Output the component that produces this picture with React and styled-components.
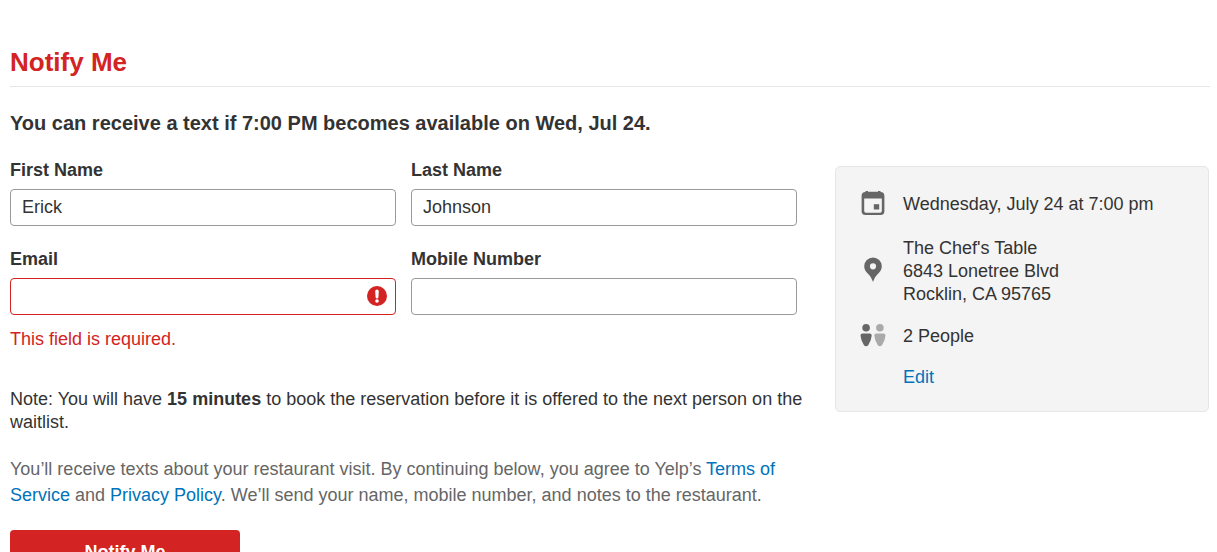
import React from 'react';
import styled, {createGlobalStyle, css} from 'styled-components';

const red = '#d32323';
const grey = '#666';

const GlobalStyle = createGlobalStyle`
* {
box-sizing: border-box;
}
body {
margin: 0;
background: #fff;
color: #333;
font-family: "Liberation Sans", Arial, sans-serif;
font-size: 18px;
line-height: 23px;
}
`;

const Page = styled.main`
padding: 44px 7px 24px 10px;
`;

const Title = styled.h1`
margin: 0 0 22px;
padding-bottom: 6px;
border-bottom: 1px solid #e6e6e6;
color: ${red};
font-size: 26px;
line-height: 36px;
`;

const Subtitle = styled.h2`
margin: 0 0 22px;
font-size: 20px;
line-height: 28px;
`;

const Columns = styled.div`
display: grid;
grid-template-columns: minmax(0, 1fr) 374px;
column-gap: 16px;
align-items: start;
padding-right: 1px;
`;

const Fields = styled.div`
display: grid;
grid-template-columns: 1fr 1fr;
gap: 22px 15px;
align-items: start;
margin-bottom: 37px;
padding-right: 22px;
`;

const Label = styled.label`
display: block;
margin-bottom: 7px;
font-weight: bold;
`;

const InputWrap = styled.div`
position: relative;
`;

const Input = styled.input`
display: block;
width: 100%;
height: 37px;
padding: 0 11px;
border: 1px solid #999;
border-radius: 4px;
background: #fff;
color: #333;
font: inherit;
outline: none;
${props => props.$invalid && css`
padding-right: 40px;
border-color: ${red};
`}
`;

const AlertIcon = styled.svg`
position: absolute;
top: 8px;
right: 8px;
`;

const ErrorText = styled.div`
margin-top: 13px;
color: ${red};
`;

const Note = styled.p`
margin: 0 0 22px;
`;

const Terms = styled.p`
margin: 0 0 22px;
color: ${grey};
line-height: 26px;
`;

const Link = styled.a`
color: #0073bb;
text-decoration: none;
&:hover {
text-decoration: underline;
}
`;

const SubmitButton = styled.button`
display: block;
width: 230px;
height: 45px;
padding: 0;
border: 0;
border-radius: 4px;
background: ${red};
color: #fff;
font: inherit;
font-weight: bold;
cursor: pointer;
`;

const Card = styled.aside`
display: grid;
row-gap: 18px;
margin-top: 7px;
padding: 22px 25px;
border: 1px solid #e6e6e6;
border-radius: 5px;
background: #f4f4f4;
`;

const Detail = styled.div`
display: grid;
grid-template-columns: 24px 1fr;
column-gap: 18px;
align-items: center;
`;

const DetailText = styled.div`
grid-column: 2;
padding-top: ${props => props.$low ? '4px' : '0'};
`;

const Address = styled.address`
padding-top: 3px;
font-style: normal;
`;

function CalendarIcon(){
    return (
        <svg width="24" height="24" viewBox="0 0 24 24" aria-hidden="true">
            <path fill={grey} fillRule="evenodd" d="M4.500 0h2.500v.8h10V0h2.500v.9a4 4 0 0 1 3.900 4v15.300a3.800 3.800 0 0 1-3.800 3.800H4.400a3.800 3.800 0 0 1-3.800-3.800V4.900a4 4 0 0 1 3.900-4zM3.200 7.500V20q0 1.700 1.700 1.700h14.200q1.700 0 1.700-1.700V7.500z"/>
            <path fill={grey} d="M12.800 13.200h5.400v5.300h-5.400z"/>
        </svg>
    )
}

function MarkerIcon(){
    return (
        <svg width="24" height="26" viewBox="0 0 24 26" aria-hidden="true">
            <path fill={grey} fillRule="evenodd" d="M12 .5a8.800 8.800 0 0 0-8.800 8.800c0 3 1.600 5.500 4 7.600 2.300 2 3.600 4.800 4.800 8.200 1.200-3.400 2.500-6.200 4.800-8.200 2.400-2.100 4-4.600 4-7.600A8.800 8.800 0 0 0 12 .5zm0 5.700a3.100 3.100 0 1 1 0 6.200 3.100 3.100 0 0 1 0-6.200z"/>
        </svg>
    )
}

function PeopleIcon(){
    return (
        <svg width="24" height="24" viewBox="0 0 24 24" overflow="visible" aria-hidden="true">
            <g fill={grey} transform="translate(-.9 -.7)">
                <circle cx="6" cy="4.500" r="3.800"/>
                <path d="M2.500 10.300h7q2.200 0 2.100 2-.3 4.600-3.200 9.100-1 1.600-2.400 1.600t-2.400-1.600Q.7 16.900.4 12.300q-.1-2 2.100-2z"/>
            </g>
            <g fill="#aaa" transform="translate(12.900 -.7)">
                <circle cx="6" cy="4.500" r="3.800"/>
                <path d="M2.500 10.300h7q2.200 0 2.100 2-.3 4.600-3.200 9.100-1 1.600-2.400 1.600t-2.400-1.600Q.7 16.900.4 12.300q-.1-2 2.100-2z"/>
            </g>
        </svg>
    )
}

function Field({id,label,type = 'text',value,error}){
    return (
        <div>
            <Label htmlFor={id}>{label}</Label>
            <InputWrap>
                <Input id={id} name={id} type={type} defaultValue={value} $invalid={!!error} aria-invalid={!!error} aria-describedby={error ? id + '-error' : undefined}/>
                {error && <AlertIcon width="21" height="21" viewBox="0 0 21 21" aria-hidden="true">
                    <circle cx="10" cy="10" r="10" fill={red}/>
                    <path fill="#fff" d="M8.200 5.200a1.800 1.800 0 0 1 3.600 0l-.4 6a1.400 1.400 0 0 1-2.800 0z"/>
                    <circle cx="10" cy="15" r="1.800" fill="#fff"/>
                </AlertIcon>}
            </InputWrap>
            {error && <ErrorText id={id + '-error'}>{error}</ErrorText>}
        </div>
    )
}

export default function App(){
    return (
        <Page>
            <GlobalStyle/>
            <Title>Notify Me</Title>
            <Subtitle>You can receive a text if 7:00 PM becomes available on Wed, Jul 24.</Subtitle>
            <Columns>
                <form onSubmit={e => e.preventDefault()}>
                    <Fields>
                        <Field id="first-name" label="First Name" value="Erick"/>
                        <Field id="last-name" label="Last Name" value="Johnson"/>
                        <Field id="email" label="Email" type="email" error="This field is required."/>
                        <Field id="mobile" label="Mobile Number" type="tel"/>
                    </Fields>
                    <Note>
                        Note: You will have <b>15 minutes</b> to book the reservation before it is offered to the next person on the waitlist.
                    </Note>
                    <Terms>
                        You’ll receive texts about your restaurant visit. By continuing below, you agree to Yelp’s <Link href="#terms">Terms of Service</Link> and <Link href="#privacy">Privacy Policy</Link>. We’ll send your name, mobile number, and notes to the restaurant.
                    </Terms>
                    <SubmitButton type="submit">Notify Me</SubmitButton>
                </form>
                <Card>
                    <Detail>
                        <CalendarIcon/>
                        <DetailText $low>Wednesday, July 24 at 7:00 pm</DetailText>
                    </Detail>
                    <Detail>
                        <MarkerIcon/>
                        <Address>
                            The Chef's Table<br/>
                            6843 Lonetree Blvd<br/>
                            Rocklin, CA 95765
                        </Address>
                    </Detail>
                    <Detail>
                        <PeopleIcon/>
                        <DetailText>2 People</DetailText>
                    </Detail>
                    <Detail>
                        <DetailText><Link href="#edit">Edit</Link></DetailText>
                    </Detail>
                </Card>
            </Columns>
        </Page>
    )
}
